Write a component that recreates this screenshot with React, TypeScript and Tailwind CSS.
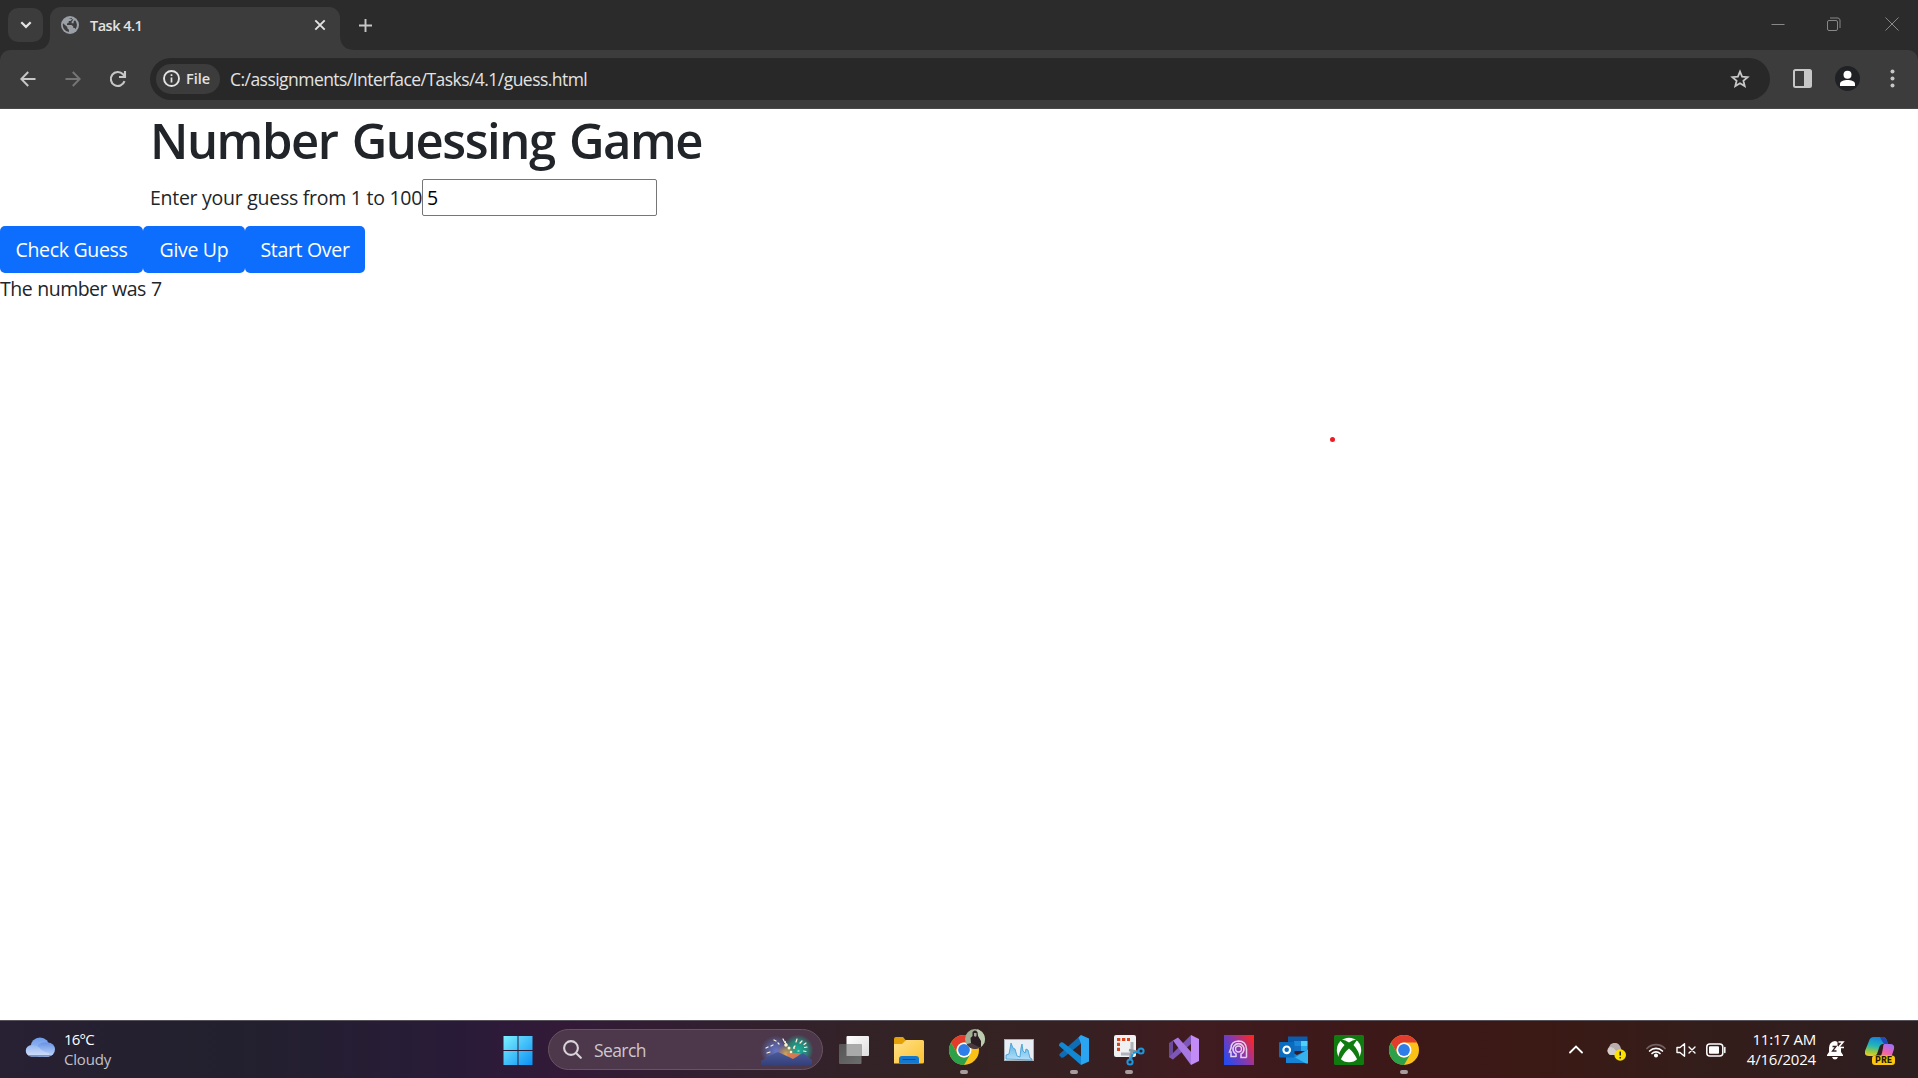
import type { ReactNode } from "react";

const sans = "font-['Open_Sans','Noto_Sans',sans-serif]";

function TabStrip() {
  return (
    <div className="flex h-[50px] items-start bg-[#2b2b2b]">
      <button className="mt-2 ml-2 flex h-[34px] w-[35px] items-center justify-center rounded-[10px] bg-[#3c3c3c]">
        <svg width="12" height="8" viewBox="0 0 12 8" fill="none" stroke="#e3e3e3" strokeWidth="2.2">
          <path d="M1.3 1.2 6 5.9l4.7-4.7" />
        </svg>
      </button>
      <div className="relative mt-[7px] ml-[7px] flex h-[43px] w-[290px] items-center rounded-t-[11px] bg-[#3c3c3c] pb-[7px] pl-[11px]">
        <svg className="absolute bottom-0 -left-[15px]" width="15" height="15" viewBox="0 0 15 15">
          <path d="M15 0v15H0Q15 15 15 0z" fill="#3c3c3c" />
        </svg>
        <svg className="absolute -right-[15px] bottom-0" width="15" height="15" viewBox="0 0 15 15">
          <path d="M0 0v15h15Q0 15 0 0z" fill="#3c3c3c" />
        </svg>
        <svg width="18" height="18" viewBox="0 0 18 18">
          <circle cx="9" cy="9" r="9" fill="#9aa0a6" />
          <path d="M2 7.2 6.3 11v1.2l1.6 1.5v2.2A7 7 0 0 1 2 7.2zM7.6 2.1h3.3v1.3L9.5 5H7.7v1.7L6 7.5v1.4h4.6l1.7 1.7v1.3h1.5l.7 1.3A7 7 0 0 0 14 4.2l-1.4 1.3v1.7h-2V5.7l1.8-2.3z" fill="#3c3c3c" />
        </svg>
        <span className="ml-[11px] w-[223px] pt-[2px] text-[14.5px] leading-5 font-semibold tracking-[-0.5px] text-[#e3e3e3]">Task 4.1</span>
        <svg width="12" height="12" viewBox="0 0 12 12" stroke="#e3e3e3" strokeWidth="1.9" className="ml-[1px]">
          <path d="m1.3 1.3 9.4 9.4M10.7 1.3l-9.4 9.4" />
        </svg>
      </div>
      <svg className="mt-[19px] ml-[19px]" width="13" height="13" viewBox="0 0 13 13" stroke="#c7c7c7" strokeWidth="1.9">
        <path d="M6.5 0v13M0 6.5h13" />
      </svg>
      <div className="mt-[17px] mr-[19.5px] ml-auto flex items-center gap-[42px]">
        <svg width="14" height="14" viewBox="0 0 14 14" stroke="#888" fill="none"><path d="M.5 7.5h13" /></svg>
        <svg width="14" height="14" viewBox="0 0 14 14" stroke="#888" fill="none">
          <rect x=".5" y="3.5" width="10" height="10" rx="1.5" />
          <path d="M3 1h8a2.5 2.5 0 0 1 2 2v8" />
        </svg>
        <svg width="14" height="14" viewBox="0 0 14 14" stroke="#888" className="ml-[2px]"><path d="m.5.5 13 13m0-13-13 13" /></svg>
      </div>
    </div>
  );
}

function Toolbar() {
  return (
    <div className="bg-[#2b2b2b]">
      <div className="flex h-[59px] items-center rounded-t-[10px] border-b border-[#4a4a4a] bg-[#3c3c3c] pb-px">
        <svg className="ml-5" width="16" height="16" viewBox="0 0 16 16" stroke="#c7c7c7" strokeWidth="2" fill="none">
          <path d="M15.5 8H2M8.2 1 1.3 8l6.9 7" />
        </svg>
        <svg className="ml-[29px]" width="16" height="16" viewBox="0 0 16 16" stroke="#757575" strokeWidth="2" fill="none">
          <path d="M.5 8H14M7.8 1l6.9 7-6.9 7" />
        </svg>
        <svg className="ml-[27.5px]" width="18" height="18" viewBox="0 0 18 18" stroke="#c7c7c7" strokeWidth="2.1" fill="none">
          <path d="M15.5 11.2A7 7 0 1 1 14 4.2l1.6 1.8M16 1v6h-6" />
        </svg>
        <div className="ml-[23.5px] flex h-[42px] w-[1620px] items-center rounded-full bg-[#282828] pr-[20px] pl-[6px]">
          <div className="flex h-[30px] w-[64px] items-center rounded-full bg-[#3c3c3c] pl-[7px]">
            <svg width="17" height="17" viewBox="0 0 17 17" fill="none" stroke="#e3e3e3">
              <circle cx="8.5" cy="8.5" r="7.5" strokeWidth="1.9" />
              <path d="M8.5 7.5v5M8.5 4.3v1.8" strokeWidth="1.7" />
            </svg>
            <span className="ml-[6px] text-[14.5px] leading-5 font-semibold text-[#e3e3e3]">File</span>
          </div>
          <span className="ml-[10px] pt-px text-[17.5px] leading-6 tracking-[-0.54px] whitespace-nowrap text-[#e3e3e3]">C:/assignments/Interface/Tasks/4.1/guess.html</span>
          <svg className="ml-auto" width="20" height="20" viewBox="0 0 20 20" fill="none" stroke="#c7c7c7" strokeWidth="1.8">
            <path d="m10 2.6 2.1 5 5.5.5-4.2 3.6 1.3 5.4-4.7-2.9-4.7 2.9 1.3-5.4L2.4 8.1l5.5-.5z" />
          </svg>
        </div>
        <svg className="ml-[23px]" width="19" height="19" viewBox="0 0 19 19">
          <rect x="1" y="1" width="17" height="17" rx="1.5" fill="none" stroke="#c7c7c7" strokeWidth="2" />
          <path d="M11 1h7v17h-7z" fill="#c7c7c7" />
        </svg>
        <svg className="ml-[23px]" width="25" height="25" viewBox="0 0 25 25">
          <circle cx="12.5" cy="12.5" r="12.5" fill="#202124" />
          <circle cx="12.5" cy="8.8" r="4" fill="#fff" />
          <path d="M5 20v-2c0-3 4-4 7.5-4s7.5 1 7.5 4v2z" fill="#fff" />
        </svg>
        <svg className="ml-[30px]" width="5" height="19" viewBox="0 0 5 19" fill="#c7c7c7">
          <circle cx="2.5" cy="2.5" r="2" /><circle cx="2.5" cy="9.5" r="2" /><circle cx="2.5" cy="16.5" r="2" />
        </svg>
      </div>
    </div>
  );
}

function BlueButton({ children, width }: { children: ReactNode; width: string }) {
  return (
    <button className={`${width} flex h-[47px] items-center justify-center rounded-[5px] bg-[#0d6efd] pt-px text-[19.5px] leading-[30px] tracking-[-0.32px] whitespace-nowrap text-white`}>
      {children}
    </button>
  );
}

function GamePage() {
  return (
    <main className="relative h-[911px] bg-white text-[19.5px] leading-[30px] text-[#212529]">
      <h1 className="ml-[150px] pt-px text-[49px] leading-[60px] font-semibold tracking-[-1.45px] [word-spacing:3px] whitespace-nowrap">Number Guessing Game</h1>
      <div className="mt-[9px] ml-[150px] flex h-[37px] items-center">
        <label className="w-[272px] pt-px tracking-[-0.27px] whitespace-nowrap">Enter your guess from 1 to 100</label>
        <input className="h-[37px] w-[235px] rounded-[2px] border border-[#767676] px-[4px] text-black" defaultValue="5" />
      </div>
      <div className="mt-[10px] flex">
        <BlueButton width="w-[143px]">Check Guess</BlueButton>
        <BlueButton width="w-[102px]">Give Up</BlueButton>
        <BlueButton width="w-[120px]">Start Over</BlueButton>
      </div>
      <p className="pt-px tracking-[-0.5px] [word-spacing:0.5px]">The number was 7</p>
      <span className="absolute top-[328px] left-[1329.5px] size-[5px] rounded-full bg-[#ed1c24]" />
    </main>
  );
}

function Chrome() {
  return (
    <g>
      <circle cx="15" cy="15" r="15" fill="#fbc116" />
      <path d="M2 7.5A15 15 0 0 1 28 7.5H15A7.5 7.5 0 0 0 8.5 18.7z" fill="#e33b2e" />
      <path d="M2 7.5 8.5 18.7A7.5 7.5 0 0 0 21.5 18.7L15 30A15 15 0 0 1 2 7.5z" fill="#2da04a" />
      <circle cx="15" cy="15" r="7.5" fill="#fff" />
      <circle cx="15" cy="15" r="5.9" fill="#2f7de9" />
    </g>
  );
}

function AppIcon({ children, running = false }: { children: ReactNode; running?: boolean }) {
  return (
    <div className="flex h-[57px] w-[55px] flex-col items-center pt-[14px]">
      <svg width="30" height="30" viewBox="0 0 30 30" overflow="visible">{children}</svg>
      {running && <span className="mt-[5px] h-1 w-2 rounded-full bg-[#a79d9f]" />}
    </div>
  );
}

function Grad({ id, from, to, x2 = 1, y2 = 1 }: { id: string; from: string; to: string; x2?: number; y2?: number }) {
  return (
    <linearGradient id={id} x1="0" y1="0" x2={x2} y2={y2}>
      <stop stopColor={from} /><stop offset="1" stopColor={to} />
    </linearGradient>
  );
}

function SearchArt() {
  return (
    <svg className="mr-[9px] ml-auto" width="53" height="32" viewBox="0 0 53 32">
      <defs>
        <radialGradient id="glowL"><stop stopColor="#6676c9" /><stop offset=".55" stopColor="#5963a2" stopOpacity=".8" /><stop offset="1" stopColor="#5963a2" stopOpacity="0" /></radialGradient>
        <radialGradient id="glowR"><stop stopColor="#15b49a" /><stop offset=".6" stopColor="#249483" stopOpacity=".8" /><stop offset="1" stopColor="#249483" stopOpacity="0" /></radialGradient>
        <radialGradient id="glowM"><stop stopColor="#e0a55f" /><stop offset=".5" stopColor="#c89350" stopOpacity=".6" /><stop offset="1" stopColor="#c86f4a" stopOpacity="0" /></radialGradient>
        <Grad id="hill" from="#4a5a9d" to="#343f78" x2={0} />
      </defs>
      <circle cx="16" cy="17" r="15.5" fill="url(#glowL)" />
      <circle cx="38" cy="16" r="15.5" fill="url(#glowR)" />
      <circle cx="26" cy="20" r="10" fill="url(#glowM)" />
      <path d="M26 19h15l-8 8z" fill="#e9764f" opacity=".85" />
      <path d="M1 30v-3l8-5 9-4 15 7 10-6 9 7v4q-1 1.5-3 1.5H4q-3 0-3-1.5z" fill="url(#hill)" />
      <g stroke="#fff4dc" strokeWidth="1.2" strokeLinecap="round">
        <path d="m23 5 1 2m1 1 1.5 2.5M14 6l2 1m-3 4-2 1m-3 1-2 1m1 5 3-1M18 9l1 1M37 5l-1 3m6-1-2 2m6 0-2 1.500m3 2.500-2.500.5m1.500 4-2.500-.5M35 12l-1 1m4 4h1" />
      </g>
      <g fill="#fff0cc"><circle cx="26" cy="11" r="1.8" /><circle cx="29" cy="14" r="1.5" /><circle cx="25" cy="8" r="1" /><circle cx="31" cy="18" r="1.3" /><circle cx="34" cy="14" r="1" /></g>
    </svg>
  );
}

function Taskbar() {
  return (
    <footer className="flex h-[58px] border-t border-[#57515a] bg-[linear-gradient(90deg,#282033_0%,#22202e_12%,#291b38_24%,#321a38_29%,#32212d_40%,#332323_48%,#372022_57%,#401b20_62%,#3c1818_72%,#3b1914_80%,#341d1a_88%,#2d1e21_100%)] text-white">
      <div className="flex h-[55px] w-[490px] items-center pl-[25px]">
        <svg width="30" height="20" viewBox="0 0 30 20" className="mb-[4px]">
          <defs><Grad id="c1" from="#6d9ceb" to="#b3caf5" x2={0} /><Grad id="c2" from="#94b6f0" to="#d5e2fb" x2={0} /><Grad id="c3" from="#6793e4" to="#c3d8fb" x2={0} /></defs>
          <circle cx="15" cy="10" r="9.5" fill="url(#c1)" />
          <rect x="12" y="5.5" width="18" height="14" rx="7" fill="url(#c3)" />
          <path d="M6.5 8Q13 8 16 12.5 19 15 24 16v3.500H6.500A5.750 5.750 0 0 1 6.500 8z" fill="url(#c2)" />
          <path d="M3 18h24q-2 1.5-4 1.5H7Q4 19.500 3 18z" fill="#6e97dc" />
        </svg>
        <div className="ml-[9px] text-[15px] leading-[20px] tracking-[-0.2px]">
          <div className="tracking-[-0.8px]">16°C</div>
          <div className="text-[#c4c0c8]">Cloudy</div>
        </div>
      </div>
      <div className="flex h-[57px] w-[55px] justify-center pt-[14px]">
        <svg width="30" height="30" viewBox="0 0 30 30">
          <defs><linearGradient id="win" gradientUnits="userSpaceOnUse" x1="0" y1="0" x2="30" y2="30"><stop stopColor="#7ff3ff" /><stop offset="1" stopColor="#0a8ff5" /></linearGradient></defs>
          <path d="M.5 1h14v14H.5zM15.500 1h14v14h-14zM.5 16h14v14H.5zM15.500 16h14v14h-14z" fill="url(#win)" />
        </svg>
      </div>
      <div className="mt-[8px] ml-[3px] flex h-[41px] w-[275px] items-center rounded-full border border-[#68545f] bg-[#4c384a] pl-[14px]">
        <svg width="19" height="19" viewBox="0 0 19 19" fill="none" stroke="#d9d3d9" strokeWidth="2.1" strokeLinecap="round">
          <circle cx="8" cy="8" r="6.9" /><path d="m13 13 4.8 4.8" />
        </svg>
        <span className="ml-[12px] text-[17.5px] leading-6 tracking-[-0.6px] text-[#cec7cd]">Search</span>
        <SearchArt />
      </div>
      <div className="ml-[3px] flex">
        <AppIcon>
          <defs><Grad id="tv" from="#fff" to="#ddd" /><Grad id="tv2" from="#555" to="#6d6d6d" /></defs>
          <rect x="7.5" y="1" width="22.5" height="20" rx="1" fill="url(#tv)" />
          <rect x="0" y="9" width="22.5" height="20" rx="1" fill="url(#tv2)" />
          <path d="M7.5 9h15v12h-15z" fill="#a9a9a9" />
        </AppIcon>
        <AppIcon>
          <defs><Grad id="fo" from="#ffe08a" to="#fcc22e" /></defs>
          <path d="M0 4q0-2 2-2h7l3 3.5V11H0z" fill="#e3a008" />
          <path d="M0 9h8l4-4h16.5Q30 5 30 6.5V27q0 1.5-1.5 1.5H0z" fill="url(#fo)" />
          <path d="M5 28.5V24q0-3 3-3h14q3 0 3 3v4.5z" fill="#1478cf" />
          <path d="M9 24.5h12" stroke="#0a4b93" strokeWidth="1.2" strokeLinecap="round" />
        </AppIcon>
        <AppIcon running>
          <Chrome />
          <defs><clipPath id="av"><circle cx="26" cy="4" r="10" /></clipPath></defs>
          <g clipPath="url(#av)">
            <path d="M16-6h21v21H16z" fill="#9fae94" />
            <path d="M28-6h9v21h-9z" fill="#bdcbb0" />
            <path d="M23.500-3q2.500-3 5 0l.5 4 3 5v8H20v-3l2-3-.5-5 2-2z" fill="#2a1e24" />
            <path d="M18 9l4-1 8 4v4H18z" fill="#4d3a40" />
            <path d="M25-2h2.500v3q-1 1.500-2.500 0z" fill="#a8a698" />
          </g>
        </AppIcon>
        <AppIcon>
          <defs><Grad id="pf" from="#5bb5e6" to="#b5def7" x2={0} /></defs>
          <rect x=".5" y="4.5" width="29" height="21" fill="#e9eef4" stroke="#a9b0b8" />
          <path d="M2 24v-4l3-1 2-11 2 5 2 1 2 7 3 1 1-9 1-4 1 7 2 2 1-4 2 1 2 8 2 1v1z" fill="url(#pf)" stroke="#3a9ad4" strokeWidth=".8" />
        </AppIcon>
        <AppIcon running>
          <path d="M22 0v8.5L4.5 22.5 2.5 22.800.5 20.500V19z" fill="#0f6db5" />
          <path d="M22 30v-8.500L4 7.500 2 7.300 0 9.300v1.500z" fill="#1388d2" />
          <path d="M22 0 19.500 2.500 22 8.500V30l8-3.500v-23z" fill="#2ba4f2" />
        </AppIcon>
        <AppIcon running>
          <rect x="0" y="0" width="22" height="22" rx="2" fill="#eff1f3" />
          <path d="M4.500 16V3" fill="none" stroke="#d8431a" strokeWidth="3" strokeDasharray="3.300 1.700" />
          <path d="M3 4.500h13" fill="none" stroke="#d8431a" strokeWidth="3" strokeDasharray="3.300 1.700" />
          <path d="M18 7v12H7" fill="none" stroke="#aeb4ba" strokeWidth="3" />
          <path d="m15 15 9 2M18 15l-2 9" stroke="#8e99a3" strokeWidth="2.5" />
          <g fill="none" stroke="#1b96df" strokeWidth="2"><circle cx="27" cy="16" r="2.6" /><circle cx="16" cy="27" r="2.6" /><path d="m19 18 5.500-1.200M18.500 19l-1.500 5.500" /></g>
        </AppIcon>
        <AppIcon>
          <path d="M0 8 4 5.500V24.500L0 22z" fill="#694a9c" />
          <path d="M22 0v9L4 24.500 0 22z" fill="#7d57b8" />
          <path d="m4 5.500 5-3L24 19l-2 11z" fill="#a879e2" />
          <path d="m22 0 8 4v22l-8 4z" fill="#c38bf6" />
        </AppIcon>
        <AppIcon>
          <defs><linearGradient id="hd" x1="0" y1=".8" x2="1" y2=".15"><stop stopColor="#264bee" /><stop offset=".5" stopColor="#8938ad" /><stop offset="1" stopColor="#ff2524" /></linearGradient></defs>
          <path d="M0 0h30v30H0z" fill="url(#hd)" />
          <g fill="none" stroke="#e6cfee" strokeWidth="1.5">
            <path d="M22.500 22.500V14Q22 6 14.500 6 7 6.500 7 13l-1.500 4H7v4.500h5" />
            <path d="M12 22v-3a5.500 5.500 0 1 1 5 0v3.500h5.500" strokeWidth="1.6" />
            <circle cx="14.5" cy="14" r="3" strokeWidth="1.3" />
          </g>
        </AppIcon>
        <AppIcon>
          <path d="M9 1.500h19.500V15H9z" fill="#0c5cad" />
          <path d="M15 6h7v5h-7z" fill="#1988d9" /><path d="M22 6h6.500v5H22z" fill="#50d0f8" />
          <path d="M15 11h7v5h-7z" fill="#136fc3" /><path d="M22 11h6.500v5H22z" fill="#28a8ea" />
          <path d="M7 14.500 18 20l11-5.500V28H7z" fill="#1683d4" /><path d="m29 14.500-13 8 11 6h2z" fill="#36b3ee" />
          <rect x="0" y="7" width="15.5" height="15.5" rx="1" fill="#0a6cbf" />
          <circle cx="7.7" cy="14.8" r="3.3" fill="none" stroke="#fff" strokeWidth="2.1" />
        </AppIcon>
        <AppIcon>
          <rect width="30" height="30" rx="1.5" fill="#107c10" />
          <circle cx="15" cy="15" r="12.2" fill="#fff" />
          <path d="M7 5q3-1 8 2.500Q20 4 23 5L19.500 10Q26 17 25.500 23.500l-2 1.500Q20 17.500 15 13.500 10 17.500 6.500 25l-2-1.500Q4 17 10.500 10L6 5.500z" fill="#107c10" />
        </AppIcon>
        <AppIcon running><Chrome /></AppIcon>
      </div>
      <div className="ml-auto flex h-[57px] items-center">
        <svg width="14" height="9" viewBox="0 0 14 9" fill="none" stroke="#fff" strokeWidth="1.8" strokeLinecap="round"><path d="m1 7.500 6-6 6 6" /></svg>
        <svg className="mt-[4px] ml-[22px]" width="21" height="18" viewBox="0 0 21 18">
          <path d="M5 12a5 5 0 0 1-1-8 6 6 0 0 1 11-1l2 5v4z" fill="#b9adad" />
          <path d="M5 12a4.500 4.500 0 0 1 0-8q4 0 6 4l3 4z" fill="#d5cccc" />
          <circle cx="15.2" cy="12" r="5.8" fill="#fde100" />
          <path d="M15.200 8.500v4M15.200 14v1.500" stroke="#222" strokeWidth="1.5" />
        </svg>
        <svg className="ml-[20px]" width="20" height="16" viewBox="0 0 20 16" fill="none" stroke="#fff" strokeWidth="1.7" strokeLinecap="round">
          <path d="M1 6.500a12.500 12.500 0 0 1 18 0" stroke="#73605f" />
          <path d="M3.600 9a9 9 0 0 1 12.800 0" /><path d="M6 11.500a5.700 5.700 0 0 1 8 0" />
          <circle cx="10" cy="13.5" r="1.2" fill="#fff" />
        </svg>
        <svg className="ml-[10px]" width="20" height="16" viewBox="0 0 20 16" fill="none" stroke="#fff" strokeWidth="1.4" strokeLinejoin="round" strokeLinecap="round">
          <path d="M1 5.500h3L8.500 1.800v12.400L4 10.500H1zM13 5l6 6m0-6-6 6" />
        </svg>
        <svg className="ml-[10px]" width="20" height="14" viewBox="0 0 20 14" fill="none" stroke="#fff" strokeWidth="1.5">
          <rect x=".8" y="1" width="16" height="12" rx="3" /><rect x="3" y="3.3" width="10" height="7.4" rx="1" fill="#fff" stroke="none" />
          <path d="M18.800 4.500v5" strokeLinecap="round" />
        </svg>
        <div className="mb-[2px] ml-[15px] flex w-[75px] flex-col items-end text-[15px] leading-[20px] tracking-[-0.2px] whitespace-nowrap">
          <div>11:17 AM</div><div>4/16/2024</div>
        </div>
        <svg className="ml-[11px]" width="18" height="20" viewBox="0 0 18 20">
          <path d="M8 1Q2 2 2 8v4L0 15v1h16v-1l-2-3V8Q13 2 8 1zM5 17h6q-1 2.500-3 2.500T5 17z" fill="#fff" />
          <path d="M5.500 6.500h3.500l-3.500 4.500h4" stroke="#342021" strokeWidth="1.3" fill="none" />
          <path d="M10.500 1H17v7h-6V6h-.5z" fill="#342021" />
          <path d="M11.500 2h4.500l-4.500 5.500H17" stroke="#fff" strokeWidth="1.6" fill="none" />
        </svg>
        <svg className="mt-px mr-[22px] ml-[20px]" width="31" height="29" viewBox="0 0 31 29">
          <defs>
            <linearGradient id="cp" x1=".4" y1="0" x2=".2" y2="1"><stop stopColor="#1684df" /><stop offset=".45" stopColor="#24b7b4" /><stop offset=".8" stopColor="#a7c936" /><stop offset="1" stopColor="#f4c92d" /></linearGradient>
            <linearGradient id="cq" x1=".7" y1="0" x2=".2" y2="1"><stop stopColor="#9c72f4" /><stop offset=".5" stopColor="#ec62b5" /><stop offset="1" stopColor="#fa8b55" /></linearGradient>
          </defs>
          <path d="M9 1h9q3 0 4 4l1 3h-5q-3 0-4 4l-2 6q-1 2-4 2H4q-5 0-4-5L4 5q1-4 5-4z" fill="url(#cp)" />
          <path d="M15 1h3q3 0 4 4l1 3h-4q-3-4-4-7z" fill="#2149b8" />
          <path d="M19 8h6q5 0 4 5l-2 6q-1 3-5 3h-9q3-1 4-5l1-5q0-3 1-4z" fill="url(#cq)" />
          <rect x="7" y="19.5" width="23" height="9.5" rx="3" fill="#fdc50b" />
          <text x="18.7" y="27.2" textAnchor="middle" fontSize="8.5" className="font-['Roboto'] font-black tracking-[0.3px]" fill="#231b05">PRE</text>
        </svg>
      </div>
    </footer>
  );
}

export default function App() {
  return (
    <div className={`${sans} h-[1078px] w-[1918px] overflow-hidden bg-white`}>
      <TabStrip />
      <Toolbar />
      <GamePage />
      <Taskbar />
    </div>
  );
}
